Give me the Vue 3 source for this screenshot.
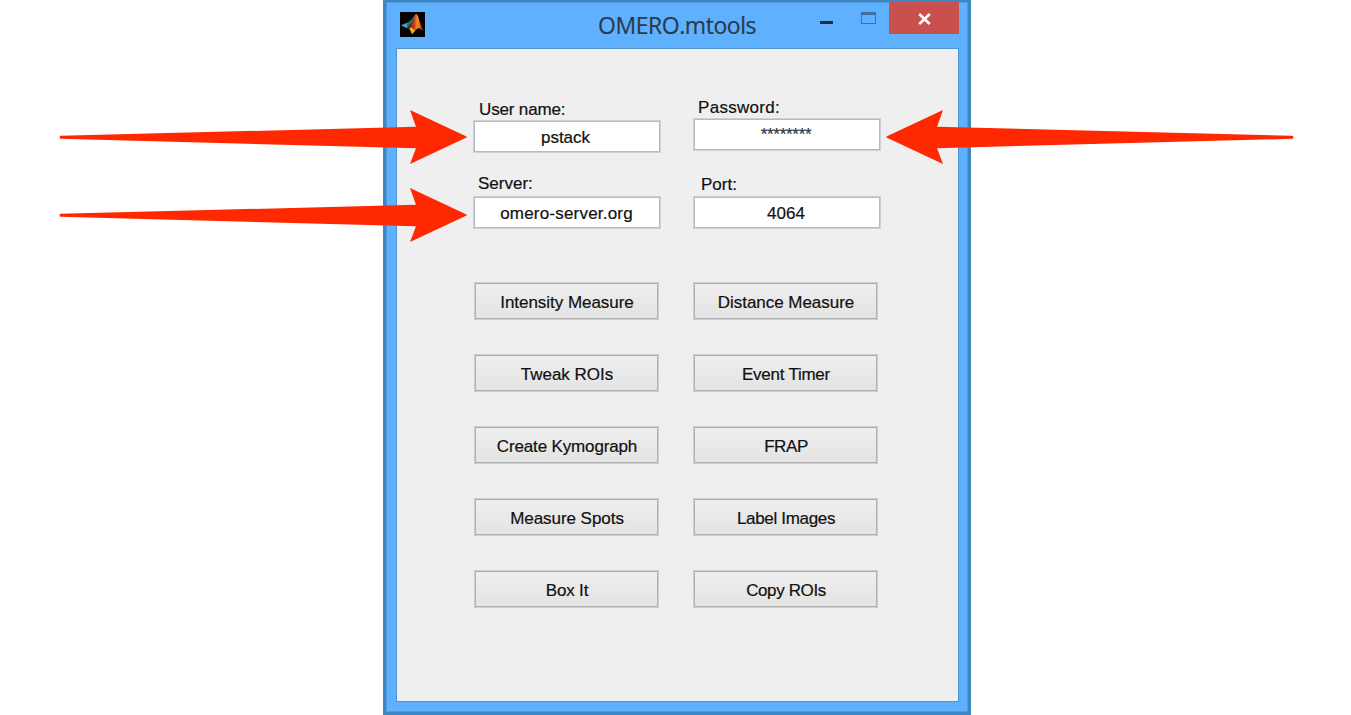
<script setup>
const fields = [
  { id: 'user', label: 'User name:', value: 'pstack' },
  { id: 'password', label: 'Password:', value: '********' },
  { id: 'server', label: 'Server:', value: 'omero-server.org' },
  { id: 'port', label: 'Port:', value: '4064' },
]
const tools = [
  { name: 'Intensity Measure', spacing: -0.04 },
  { name: 'Distance Measure', spacing: -0.04 },
  { name: 'Tweak ROIs', spacing: -0.02 },
  { name: 'Event Timer', spacing: -0.25 },
  { name: 'Create Kymograph', spacing: -0.15 },
  { name: 'FRAP', spacing: -0.4 },
  { name: 'Measure Spots', spacing: -0.05 },
  { name: 'Label Images', spacing: -0.32 },
  { name: 'Box It', spacing: -0.15 },
  { name: 'Copy ROIs', spacing: -0.38 },
]
</script>

<template>
  <main class="stage">
    <section class="window">
      <header class="titlebar">
        <svg class="logo" width="25" height="25" viewBox="0 0 25 25">
          <defs>
            <linearGradient id="flame" x1="0" x2="1" y1="0" y2="0">
              <stop offset="0" stop-color="#5b1d16" />
              <stop offset=".4" stop-color="#b83a16" />
              <stop offset=".62" stop-color="#ff8a1c" />
              <stop offset="1" stop-color="#8a220c" />
            </linearGradient>
          </defs>
          <rect width="25" height="25" fill="#020202" />
          <path d="M1 13.3 7 10.8 10 12 7 16.3Z" fill="#3fa3c5" />
          <path d="M7 10.8 10.5 8.5 15.5 2 12.5 10 9 14 7 15.5Z" fill="#266b7c" />
          <path d="M7 16.3Q11 14 13.5 7 15 2 16.2 1.8 18 3 19.5 9 21.5 16 23.8 19.5 20 15.5 17.5 16.5 14 19.5 12 22.3 11 17.5 7 16.3Z" fill="url(#flame)" />
          <path d="M9.3 16.7 11.5 15.5 15 18.8 12 22.3Q11 18.5 9.3 16.7Z" fill="#f7b51d" />
        </svg>
        <h1 class="title">OMERO.mtools</h1>
        <div class="controls">
          <span class="minimize"></span>
          <span class="maximize"></span>
          <span class="close">
            <svg width="13" height="12" viewBox="0 0 13 12">
              <path d="M1.2 1 11.8 11M11.8 1 1.2 11" stroke="#fff" stroke-width="2.6" fill="none" />
            </svg>
          </span>
        </div>
      </header>
      <div class="client">
        <div class="fields">
          <div v-for="f in fields" :key="f.id" class="field" :class="f.id">
            <span class="label">{{ f.label }}</span>
            <div class="input">{{ f.value }}</div>
          </div>
        </div>
        <div class="tools">
          <button v-for="t in tools" :key="t.name" class="tool" :style="{ letterSpacing: t.spacing + 'px' }">{{ t.name }}</button>
        </div>
      </div>
    </section>
    <svg class="arrows" width="1351" height="715" viewBox="0 0 1351 715">
      <g fill="#ff2800">
        <path d="M60.5 135.8 416 126.8 410 110 466 136.2Q467.5 137 466 137.8L410 164 416 148.2 60.5 138.8Q58.5 137.3 60.5 135.8Z" />
        <path d="M60.5 213.8 416 204.8 410 188 466 214.2Q467.5 215 466 215.8L410 242 416 226.2 60.5 216.8Q58.5 215.3 60.5 213.8Z" />
        <path d="M1292.5 135.8 937 126.8 943 110 887 136.2Q885.5 137 887 137.8L943 164 937 148.2 1292.5 138.8Q1294.5 137.3 1292.5 135.8Z" />
      </g>
    </svg>
  </main>
</template>

<style>
body { background: #fff; overflow: hidden; }
</style>

<style scoped>
.stage {
  position: relative;
  width: 1351px;
  height: 715px;
  display: flex;
  font-family: "Liberation Sans", Arial, sans-serif;
  font-size: 17px;
  color: #111;
  -webkit-text-stroke: 0.2px currentColor;
}
.window {
  box-sizing: border-box;
  width: 588px;
  height: 715px;
  margin-left: 383px;
  border: 2px solid #3d86bf;
  border-left-width: 3px;
  border-right-width: 3px;
  border-bottom-width: 3px;
  background: #5fb0ff;
  box-shadow: inset 0 0 0 1px #4f9bdd;
  display: flex;
  flex-direction: column;
}
.titlebar {
  height: 46px;
  display: grid;
  grid-template-columns: 25px 1fr 150px;
  padding: 0 9px 0 14px;
}
.logo { margin-top: 10px; }
.title {
  margin: 6px 0 0 173px;
  font: 400 23px/34px "Open Sans", sans-serif;
  letter-spacing: -0.45px;
  color: #2b3a4a;
  white-space: nowrap;
}
.controls { display: flex; justify-content: flex-end; align-items: flex-start; }
.minimize { width: 13px; height: 3px; margin: 19px 28px 0 0; background: #202c38; }
.maximize {
  box-sizing: border-box;
  width: 15px;
  height: 12px;
  margin: 10px 13px 0 0;
  border: 1px solid #426f9c;
  border-top-width: 3px;
}
.close {
  width: 70px;
  height: 32px;
  background: #c9504c;
  display: flex;
  align-items: center;
  justify-content: center;
}
.close svg { margin-top: 1px; }
.client {
  box-sizing: border-box;
  width: 563px;
  height: 654px;
  margin-left: 10px;
  border: 1px solid #4c94d3;
  background: #efefef;
  padding: 49px 0 0 76px;
}
.fields {
  display: grid;
  grid-template-columns: 188px 188px;
  grid-template-rows: 76px 58px;
  column-gap: 32px;
}
.label { display: block; height: 20px; line-height: 20px; padding-left: 6px; white-space: nowrap; }
.input {
  box-sizing: border-box;
  width: 188px;
  height: 33px;
  border: 1px solid #cfcfd4;
  padding-right: 2px;
  background: #fff;
  box-shadow: inset 0 0 0 1px #b9b9c1;
  text-align: center;
  line-height: 34px;
}
.user { margin-top: 2px; }
.user .label { letter-spacing: -0.15px; }
.user .input { padding-right: 3px; }
.password .label { padding-left: 5px; letter-spacing: 0.3px; }
.password .input { letter-spacing: -0.3px; line-height: 32px; color: #2a3540; }
.server .label { padding-left: 5px; height: 22px; line-height: 19px; }
.port .label { padding-left: 8px; height: 22px; line-height: 22px; }
.server .input { padding-right: 1px; letter-spacing: 0.2px; }
.tools {
  margin: 50px 0 0 1px;
  display: grid;
  grid-template-columns: 185px 185px;
  grid-auto-rows: 38px;
  gap: 34px;
}
.tool {
  box-sizing: border-box;
  padding: 4px 0 0 1px;
  border: 1px solid #cdcdcd;
  background: linear-gradient(#efefef, #e3e3e3);
  box-shadow: inset 0 0 0 1px #b0b0b0;
  font: inherit;
  color: inherit;
  text-align: center;
  -webkit-text-stroke: inherit;
}
.arrows { position: absolute; left: 0; top: 0; }
</style>
